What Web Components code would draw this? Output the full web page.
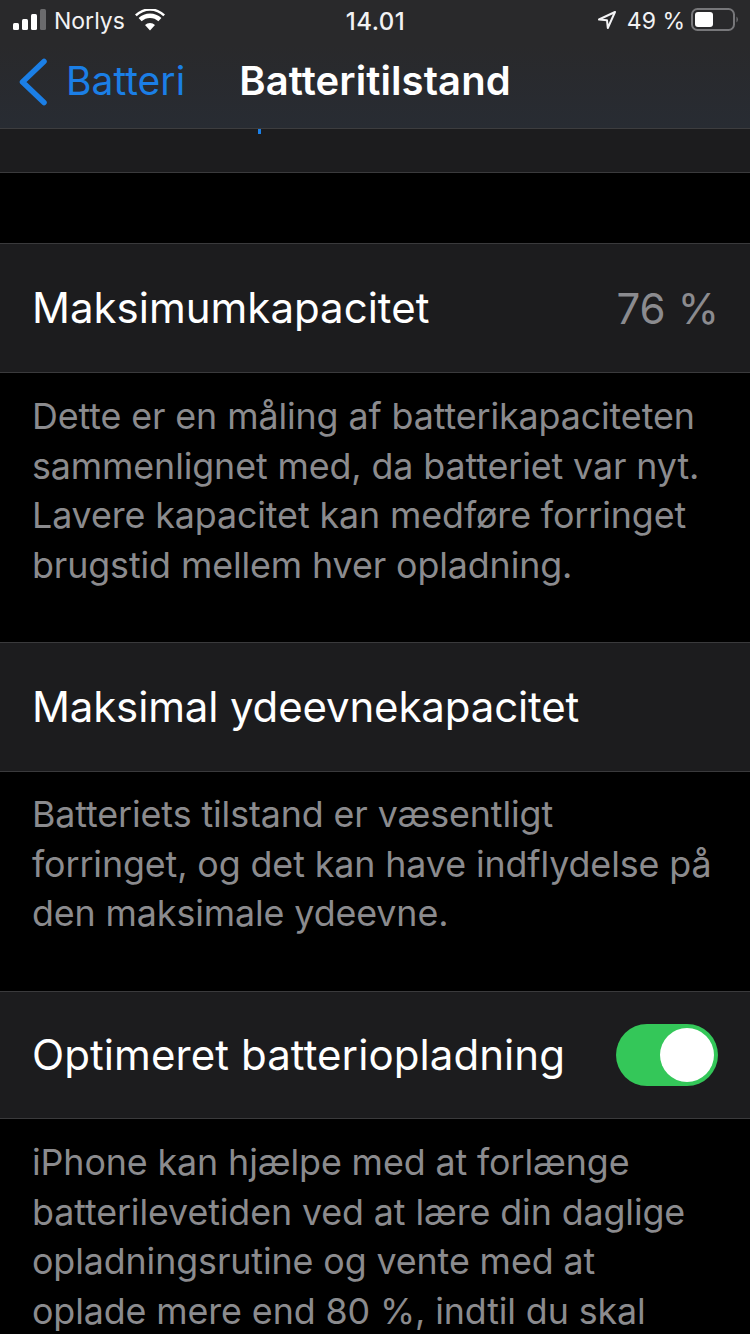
<!DOCTYPE html>
<html><head><meta charset="utf-8">
<style>
html,body{margin:0;padding:0;background:#000}
body{width:750px;height:1334px;overflow:hidden;font-family:Inter,"Liberation Sans",sans-serif;-webkit-font-smoothing:antialiased}
</style></head><body>
<template id="t-status">
<style>
:host{display:flex;align-items:center;height:40px;box-sizing:border-box;padding:2px 13px 0;font-size:23px;color:#f2f2f4;position:relative}
.l,.r{display:flex;align-items:center}
.l{flex:1;gap:9px}
.r{flex:1;justify-content:flex-end;gap:0}
.t{font-weight:500;font-size:24px;letter-spacing:.5px;margin-right:-1px}
svg{display:block;margin-top:-2px}
</style>
<div class="l">
<svg width="34" height="22" viewBox="0 0 34 22"><rect x="0" y="14" width="6" height="7" rx="1.5" fill="#fff"/><rect x="9" y="10" width="6" height="11" rx="1.5" fill="#fff"/><rect x="18" y="5" width="6" height="16" rx="1.5" fill="#fff"/><rect x="27" y="0" width="6" height="21" rx="1.5" fill="#6b6b6d"/></svg>
<span style="margin-left:-2px">Norlys</span>
<svg style="margin-left:1px" width="30" height="22" viewBox="0 0 30 22"><path d="M15 21.500l-5-5.600a7.400 7.400 0 0 1 10 0zM6.600 12.300l-3-3.200a16.600 16.600 0 0 1 22.800 0l-3 3.200a12.200 12.200 0 0 0-16.800 0zM1.700 7.200L0 5.400a21.500 21.500 0 0 1 30 0l-1.700 1.800a19 19 0 0 0-26.600 0z" fill="#fff"/></svg>
</div>
<div class="t">14.01</div>
<div class="r">
<svg width="20" height="20" viewBox="0 0 20 20" style="margin-right:10px"><path d="M18 2L2 9.500l8 .8.8 7.700z" fill="none" stroke="#f2f2f4" stroke-width="2" stroke-linejoin="round"/></svg>
<span>49 %</span>
<svg width="48" height="24" viewBox="0 0 48 24" style="margin:-2px -2px 0 6px"><rect x="1" y="1" width="42" height="21" rx="5.500" fill="none" stroke="#77777a" stroke-width="2"/><rect x="4" y="4" width="18" height="15" rx="3" fill="#fff"/><path d="M45.500 8.500a4 4 0 0 1 0 6z" fill="#77777a"/></svg>
</div>
</template>
<template id="t-nav">
<style>
:host{display:flex;align-items:center;height:88px;box-sizing:border-box;padding-bottom:6px;position:relative;color:#fff;font-size:39px}
svg{position:absolute;left:18px;top:18px}
.b{position:absolute;left:66px;top:19px;color:#1b7fe6;line-height:44px}
.t{flex:1;text-align:center;font-weight:600;font-size:40px;letter-spacing:.1px;line-height:44px}
</style>
<svg width="30" height="48" viewBox="0 0 30 48"><path d="M26 3.500L4.500 24 26 44.500" fill="none" stroke="#1b7fe6" stroke-width="5.500" stroke-linecap="round" stroke-linejoin="round"/></svg>
<span class="b">Batteri</span>
<div class="t">Batteritilstand</div>
</template>
<template id="t-header">
<style>
:host{display:block;background:linear-gradient(180deg,#29292b 0%,#29292b 35%,#282c33 100%);border-bottom:1px solid #3d3d3f}
</style>
<slot></slot>
</template>
<template id="t-row">
<style>
:host{display:flex;align-items:center;justify-content:space-between;box-sizing:border-box;background:#1c1c1e;border-top:1px solid #3a3a3c;border-bottom:1px solid #3a3a3c;padding:0 32px;font-size:42px;color:#fff}
.w{display:block;margin-top:-2px}
::slotted([slot=v]){color:#8b8b8f}
::slotted(span[slot=v]){margin-right:-1px;letter-spacing:.1px}
</style>
<span class="w"><slot></slot></span><slot name="v"></slot>
</template>
<template id="t-note">
<style>
:host{display:block;box-sizing:border-box;padding:0 32px;color:#8b8b8e;font-size:35.800px;line-height:49.500px;letter-spacing:-.1px;white-space:nowrap}
</style>
<slot></slot>
</template>
<template id="t-switch">
<style>
:host{display:block;width:102px;height:62px;border-radius:31px;background:#34c759;position:relative}
i{position:absolute;right:4px;top:4px;width:54px;height:54px;border-radius:50%;background:#fff}
</style>
<i></i>
</template>
<script>
for(const [n,id] of [['ios-status','t-status'],['ios-nav','t-nav'],['ios-header','t-header'],['ios-row','t-row'],['ios-note','t-note'],['ios-switch','t-switch']]){
customElements.define(n,class extends HTMLElement{constructor(){super();this.attachShadow({mode:'open'}).appendChild(document.getElementById(id).content.cloneNode(true))}})
}
</script>
<ios-header><ios-status></ios-status><ios-nav></ios-nav></ios-header>
<div style="height:43px;background:#1c1c1e;position:relative;border-bottom:1px solid #3a3a3c;box-sizing:content-box"><span style="position:absolute;left:258px;top:0;width:3px;height:5px;background:#1b7fe6"></span></div>
<div style="height:70px"></div>
<ios-row style="height:130px"><span>Maksimumkapacitet</span><span slot="v">76 %</span></ios-row>
<ios-note style="height:269px;padding-top:19px">Dette er en måling af batterikapaciteten<br>sammenlignet med, da batteriet var nyt.<br>Lavere kapacitet kan medføre forringet<br>brugstid mellem hver opladning.</ios-note>
<ios-row style="height:130px"><span style="letter-spacing:-.15px">Maksimal ydeevnekapacitet</span></ios-row>
<ios-note style="height:219px;padding-top:18px">Batteriets tilstand er væsentligt<br>forringet, og det kan have indflydelse på<br>den maksimale ydeevne.</ios-note>
<ios-row style="height:128px"><span style="letter-spacing:.08px">Optimeret batteriopladning</span><ios-switch slot="v"></ios-switch></ios-row>
<ios-note style="padding-top:19px">iPhone kan hjælpe med at forlænge<br>batterilevetiden ved at lære din daglige<br>opladningsrutine og vente med at<br>oplade mere end 80 %, indtil du skal</ios-note>
</body></html>
